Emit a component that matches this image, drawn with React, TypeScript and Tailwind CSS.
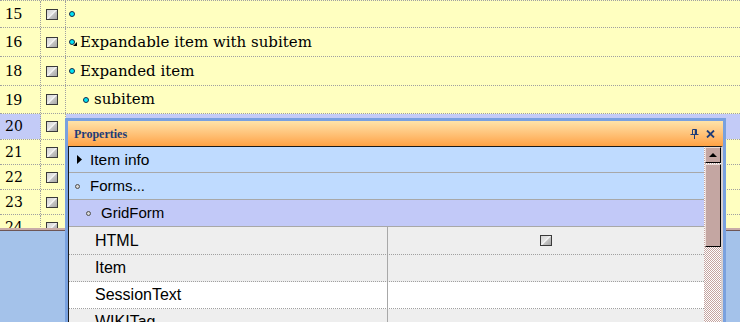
import clsx from 'clsx'
import type { ReactNode } from 'react'

const SERIF = 'font-["DejaVu_Serif",serif]'
const SANS = 'font-["Liberation_Sans",Arial,sans-serif]'

function Box() {
  return (
    <span className="block w-[12px] h-[11px] border border-[#3a3a3a] bg-[linear-gradient(135deg,#d4d4d4_0%,#e6e6e6_44%,#ffffff_50%,#c6c6c6_56%,#a6a6a6_100%)]" />
  )
}

function Dot({ expand }: { expand?: boolean }) {
  return (
    <span className="relative block w-[6px] h-[6px]">
      <span className="block w-[6px] h-[6px] rounded-full bg-[#00e4f6] border border-[#1a2a48]" />
      {expand && (
        <svg className="absolute left-[4px] top-[3px]" width="4" height="4" viewBox="0 0 4 4">
          <path d="M4 0V4H0Z" fill="#000" />
        </svg>
      )}
    </span>
  )
}

interface RowProps {
  num: string
  h: string
  selected?: boolean
  big?: boolean
  children?: ReactNode
}

function Row({ num, h, selected, big, children }: RowProps) {
  return (
    <div className={clsx('flex border-b border-dotted border-[#a0a0a0]', h)}>
      <div
        className={clsx(
          'w-[41px] shrink-0 flex items-center pl-[5px] border-r border-dotted border-[#a0a0a0] text-black',
          big ? 'font-["Liberation_Serif",serif] text-[17px]' : clsx(SERIF, 'text-[14px]'),
          selected && 'bg-[#c3cbf7]'
        )}
      >
        {num}
      </div>
      <div className="w-[25px] shrink-0 flex items-center pl-[5px] border-r border-dotted border-[#a0a0a0]">
        <Box />
      </div>
      <div className={clsx('flex-1 flex items-center gap-[2px] pl-[3px] text-[15px] text-black', SERIF, selected && 'bg-[#c3cbf7]')}>
        {children}
      </div>
    </div>
  )
}

function PinIcon() {
  return (
    <svg width="9" height="10" viewBox="0 0 9 10" fill="none" stroke="#1e3c78">
      <path d="M2.5 0.5H6.5V5.5H2.5Z" />
      <path d="M5.5 0.5V5.5" strokeWidth="1.5" />
      <path d="M0.5 5.5H8.5" />
      <path d="M4.5 6V10" />
    </svg>
  )
}

function CloseIcon() {
  return (
    <svg width="9" height="8" viewBox="0 0 9 8" fill="none" stroke="#1e3c78" strokeWidth="1.8">
      <path d="M1 0.5L8 7.5M8 0.5L1 7.5" />
    </svg>
  )
}

function PropRow({ name, white, check, h = 'h-[27px]' }: { name: string; white?: boolean; check?: boolean; h?: string }) {
  return (
    <div className={clsx('flex border-b border-dotted border-[#a0a0a0]', h, white ? 'bg-white' : 'bg-[#eeeeee]')}>
      <div className={clsx('w-[319px] shrink-0 flex items-center pl-[26px] border-r border-[#a8a8a8] text-[16px] text-black', SANS)}>
        {name}
      </div>
      <div className="flex-1 flex items-center justify-center">{check && <Box />}</div>
    </div>
  )
}

function Properties() {
  return (
    <div className="absolute left-[65px] top-[118px] w-[661px] h-[230px] border-[3px] border-[#79a1df] bg-[#d4d0c8] flex flex-col">
      {/* Title bar */}
      <div className="h-[25px] shrink-0 flex items-center pl-[6px] pr-[8px] bg-linear-to-b from-[#ffe3a8] to-[#ffa243]">
        <span className='font-["Liberation_Serif",serif] font-bold text-[12px] text-[#1e3c78]'>Properties</span>
        <div className="ml-auto flex items-center gap-[7px]">
          <PinIcon />
          <CloseIcon />
        </div>
      </div>

      {/* Body */}
      <div className="flex-1 flex border-t border-l border-[#1a1a1a] border-r-2 border-r-[#d8d0d0] min-h-0">
        <div className="flex-1 flex flex-col">
          <div className={clsx('h-[26px] flex items-center pl-[8px] gap-[8px] bg-[#bfdbff] border-b border-[#a8a8a8] text-[15.5px] text-black', SANS)}>
            <svg width="5" height="9" viewBox="0 0 5 9">
              <path d="M0 0L5 4.5L0 9Z" fill="#000" />
            </svg>
            Item info
          </div>
          <div className={clsx('h-[27px] flex items-center pl-[6px] gap-[10px] bg-[#bfdbff] border-b border-[#a8a8a8] text-[15px] text-black', SANS)}>
            <span className="block w-[5px] h-[5px] rounded-full border border-[#505050] bg-[#d8d8d8]" />
            Forms...
          </div>
          <div className={clsx('h-[27px] flex items-center pl-[17px] gap-[10px] bg-[#c2c9f8] border-b border-[#a8a8a8] text-[15px] text-black', SANS)}>
            <span className="block w-[5px] h-[5px] rounded-full border border-[#505050] bg-[#d8d8d8]" />
            GridForm
          </div>
          <PropRow name="HTML" check h="h-[28px]" />
          <PropRow name="Item" />
          <PropRow name="SessionText" white />
          <PropRow name="WIKITag" />
        </div>

        {/* Scrollbar */}
        <div className="w-[17px] shrink-0 flex flex-col items-end bg-[repeating-conic-gradient(#c4a4a0_0_25%,#ffffff_0_50%)] bg-size-[2px_2px]">
          <div className="w-[16px] h-[16px] flex items-center justify-center bg-[#c4a6a2] border border-t-[#eadcd8] border-l-[#eadcd8] border-r-black border-b-black">
            <svg width="8" height="4" viewBox="0 0 8 4">
              <path d="M0 4L4 0L8 4Z" fill="#000" />
            </svg>
          </div>
          <div className="w-[16px] h-[83px] mt-px bg-[#c4a6a2] border border-t-[#eadcd8] border-l-[#eadcd8] border-r-black border-b-black" />
        </div>
      </div>
    </div>
  )
}

export default function App() {
  return (
    <div className="relative w-[740px] h-[322px] overflow-hidden bg-[#a4c2ea]">
      <div className="bg-[#ffffc0] border-t border-dotted border-[#a0a0a0]">
        <Row num="15" h="h-[27px]" big>
          <Dot />
        </Row>
        <Row num="16" h="h-[29px]" big>
          <Dot expand />
          <span className="ml-[3px]">Expandable item with subitem</span>
        </Row>
        <Row num="18" h="h-[29px]" big>
          <Dot />
          <span className="ml-[3px]">Expanded item</span>
        </Row>
        <Row num="19" h="h-[28px]" big>
          <span className="ml-[14px]">
            <Dot />
          </span>
          <span className="ml-[3px]">subitem</span>
        </Row>
        <Row num="20" h="h-[26px]" selected />
        <Row num="21" h="h-[25px]" />
        <Row num="22" h="h-[25px]" />
        <Row num="23" h="h-[25px]" />
        <div className="h-[13px] overflow-hidden">
          <Row num="24" h="h-[25px]" />
        </div>
      </div>
      <div className="h-[3px] bg-[#c8aca8] border-b border-[#6e5656]" />

      <Properties />
    </div>
  )
}
